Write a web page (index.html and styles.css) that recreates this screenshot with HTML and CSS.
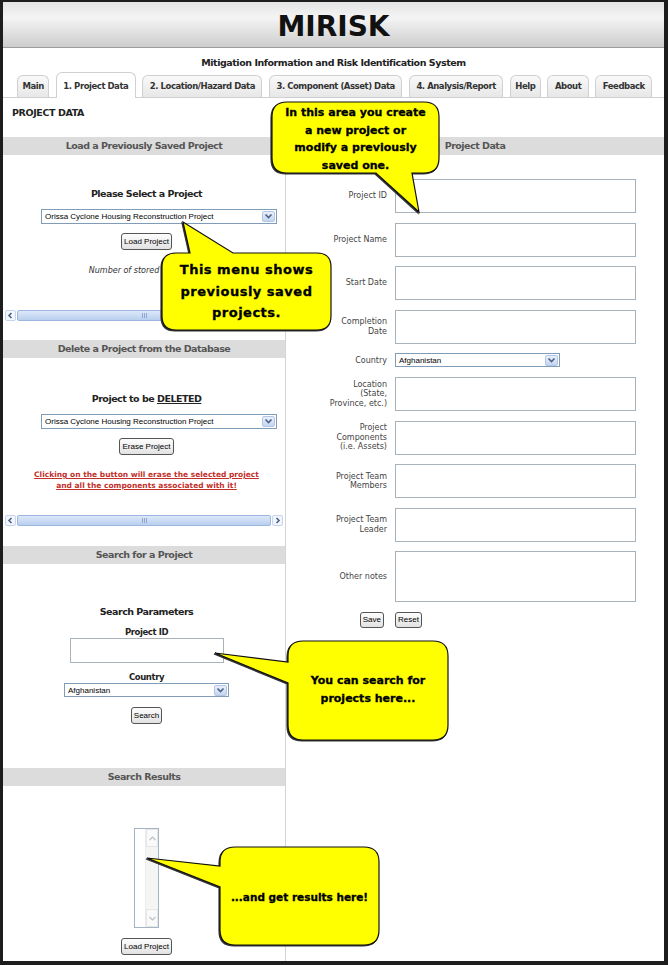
FILE: index.html
```html
<!DOCTYPE html>
<html lang="en">
<head>
    <meta charset="UTF-8">
    <meta name="viewport" content="width=device-width, initial-scale=1.0">
    <title>MIRISK - Project Data</title>
    <link rel="stylesheet" href="styles.css">
</head>
<body>
    <div class="frame">
        <div class="header">
            <h1>MIRISK</h1>
        </div>
        <div class="subtitle">Mitigation Information and Risk Identification System</div>

        <ul class="tabs">
            <li class="tight">Main</li>
            <li class="active">1. Project Data</li>
            <li>2. Location/Hazard Data</li>
            <li>3. Component (Asset) Data</li>
            <li>4. Analysis/Report</li>
            <li class="tight">Help</li>
            <li>About</li>
            <li>Feedback</li>
        </ul>

        <div class="page-title">PROJECT DATA</div>

        <div class="columns">
            <div class="left">
                <div class="panel panel-load">
                    <div class="band">Load a Previously Saved Project</div>
                    <div class="panel-body">
                        <h3>Please Select a Project</h3>
                        <div class="select wide">
                            <span>Orissa Cyclone Housing Reconstruction Project</span>
                            <i class="arrow"><svg viewBox="0 0 9 7" width="9" height="7"><path d="M1.5 1.5 4.5 4.5 7.5 1.5"/></svg></i>
                        </div>
                        <button class="btn">Load Project</button>
                        <p class="stored">Number of stored projects: 3</p>
                        <div class="hscroll">
                            <span class="sb-btn"><svg viewBox="0 0 7 7" width="7" height="7"><path d="M4.5 1 2 3.5 4.5 6"/></svg></span>
                            <span class="sb-thumb"><i></i></span>
                            <span class="sb-btn"><svg viewBox="0 0 7 7" width="7" height="7"><path d="M2.5 1 5 3.5 2.5 6"/></svg></span>
                        </div>
                    </div>
                </div>

                <div class="panel panel-delete">
                    <div class="band">Delete a Project from the Database</div>
                    <div class="panel-body">
                        <h3>Project to be <u>DELETED</u></h3>
                        <div class="select wide">
                            <span>Orissa Cyclone Housing Reconstruction Project</span>
                            <i class="arrow"><svg viewBox="0 0 9 7" width="9" height="7"><path d="M1.5 1.5 4.5 4.5 7.5 1.5"/></svg></i>
                        </div>
                        <button class="btn">Erase Project</button>
                        <p class="warning">Clicking on the button will erase the selected project<br>and all the components associated with it!</p>
                        <div class="hscroll">
                            <span class="sb-btn"><svg viewBox="0 0 7 7" width="7" height="7"><path d="M4.5 1 2 3.5 4.5 6"/></svg></span>
                            <span class="sb-thumb"><i></i></span>
                            <span class="sb-btn"><svg viewBox="0 0 7 7" width="7" height="7"><path d="M2.5 1 5 3.5 2.5 6"/></svg></span>
                        </div>
                    </div>
                </div>

                <div class="panel panel-search">
                    <div class="band">Search for a Project</div>
                    <div class="panel-body">
                        <h3>Search Parameters</h3>
                        <div class="field-label">Project ID</div>
                        <input type="text" class="search-input">
                        <div class="field-label">Country</div>
                        <div class="select country">
                            <span>Afghanistan</span>
                            <i class="arrow"><svg viewBox="0 0 9 7" width="9" height="7"><path d="M1.5 1.5 4.5 4.5 7.5 1.5"/></svg></i>
                        </div>
                        <button class="btn">Search</button>
                    </div>
                </div>

                <div class="panel panel-results">
                    <div class="band">Search Results</div>
                    <div class="panel-body">
                        <div class="listbox">
                            <div class="lb-scroll">
                                <span class="lb-btn"><svg viewBox="0 0 9 7" width="9" height="7"><path d="M1.5 5 4.5 2 7.5 5"/></svg></span>
                                <span class="lb-btn"><svg viewBox="0 0 9 7" width="9" height="7"><path d="M1.5 2 4.5 5 7.5 2"/></svg></span>
                            </div>
                        </div>
                        <button class="btn">Load Project</button>
                    </div>
                </div>
            </div>

            <div class="right">
                <div class="band">Project Data</div>
                <form class="project-form">
                    <label>Project ID</label>
                    <input type="text">
                    <label>Project Name</label>
                    <input type="text">
                    <label>Start Date</label>
                    <input type="text">
                    <label>Completion Date</label>
                    <input type="text">
                    <label>Country</label>
                    <div class="select short">
                        <span>Afghanistan</span>
                        <i class="arrow"><svg viewBox="0 0 9 7" width="9" height="7"><path d="M1.5 1.5 4.5 4.5 7.5 1.5"/></svg></i>
                    </div>
                    <label>Location (State, Province, etc.)</label>
                    <input type="text">
                    <label>Project Components (i.e. Assets)</label>
                    <input type="text">
                    <label>Project Team Members</label>
                    <input type="text">
                    <label>Project Team Leader</label>
                    <input type="text">
                    <label>Other notes</label>
                    <textarea class="notes"></textarea>
                    <button type="button" class="btn save">Save</button>
                    <button type="reset" class="btn reset">Reset</button>
                </form>
            </div>
        </div>
    </div>

    <!-- help callouts drawn over the page -->
    <svg class="callout-shapes" viewBox="0 0 668 965" width="668" height="965">
        <path d="M287 102 H424 Q439 102 439 117 V158 Q439 173 424 173 H412 L419 212 L376 173 H287 Q272 173 272 158 V117 Q272 102 287 102 Z"/>
        <path d="M176 253 H190 L183 222 L233 253 H317 Q331 253 331 267 V316 Q331 330 317 330 H176 Q162 330 162 316 V267 Q162 253 176 253 Z"/>
        <path d="M303 641 H433 Q448 641 448 656 V725 Q448 740 433 740 H303 Q288 740 288 725 V683 L215 653 L288 662 V656 Q288 641 303 641 Z"/>
        <path d="M235 847 H364 Q379 847 379 862 V930 Q379 945 364 945 H235 Q220 945 220 930 V887 L147 858 L220 866 V862 Q220 847 235 847 Z"/>
    </svg>
    <div class="callout-text c1">In this area you create<br>a new project or<br>modify a previously<br>saved one.</div>
    <div class="callout-text c2">This menu shows<br>previously saved<br>projects.</div>
    <div class="callout-text c3">You can search for<br>projects here...</div>
    <div class="callout-text c4">...and get results here!</div>
</body>
</html>
```

FILE: styles.css
```css
body {
    margin: 0;
    position: relative;
    font-family: "DejaVu Sans", Verdana, sans-serif;
    font-size: 8px;
    color: #333;
    background-color: #fff;
}

.frame {
    box-sizing: border-box;
    width: 668px;
    height: 965px;
    border-style: solid;
    border-color: #1d1d1d;
    border-width: 2px 4px 4px 3px;
    overflow: hidden;
    background-color: #fff;
}

.header {
    box-sizing: border-box;
    height: 46px;
    padding-top: 8px;
    background: linear-gradient(#e4e4e4, #f4f4f4 35%, #cdcdcd);
    border-bottom: 1px solid #9d9d9d;
    text-align: center;
}

.header h1 {
    margin: 0;
    font-size: 28px;
    line-height: 33px;
    color: #111;
}

.subtitle {
    padding: 9px 0 3px;
    line-height: 12px;
    font-size: 9.5px;
    font-weight: bold;
    letter-spacing: -0.45px;
    text-align: center;
    color: #222;
}

.tabs {
    display: flex;
    align-items: flex-end;
    gap: 6.5px;
    height: 25px;
    margin: 0;
    padding: 0 0 0 14px;
    list-style: none;
    border-bottom: 1px solid #d0d0d0;
}

.tabs li {
    box-sizing: border-box;
    height: 22px;
    padding: 0 6.5px;
    line-height: 21px;
    border: 1px solid #d0d0d0;
    border-bottom: none;
    border-radius: 6px 6px 0 0;
    background: linear-gradient(#f9f9f9, #e7e7e7);
    font-size: 8.5px;
    font-weight: bold;
    letter-spacing: -0.45px;
    color: #333;
    white-space: nowrap;
}

.tabs li.tight {
    padding: 0 4.5px;
}

.tabs li.active {
    height: 26px;
    margin-bottom: -1px;
    padding-top: 3px;
    background: #fff;
}

.page-title {
    box-sizing: border-box;
    height: 39px;
    padding: 9px 0 0 9px;
    line-height: 12px;
    font-size: 9.5px;
    font-weight: bold;
    letter-spacing: -0.4px;
    color: #222;
}

.columns {
    display: flex;
    height: 824px;
}

.left {
    flex: none;
    width: 282px;
}

.right {
    flex: 1;
    border-left: 1px solid #d4d4d4;
}

.band {
    height: 18px;
    line-height: 18px;
    background-color: #dcdcdc;
    text-align: center;
    font-size: 9.5px;
    font-weight: bold;
    letter-spacing: -0.5px;
    color: #555;
}

.panel-load { height: 203px; }
.panel-delete { height: 206px; }
.panel-search { height: 222px; }

.panel-body {
    display: flow-root;
    padding-left: 5px;
    text-align: center;
}

.panel-body h3 {
    margin: 33px 0 0;
    line-height: 12px;
    font-size: 9.5px;
    letter-spacing: -0.5px;
    color: #222;
}

.panel-delete h3 { margin-top: 35px; }
.panel-search h3 { margin-top: 42px; }

.select {
    display: flex;
    align-items: center;
    box-sizing: border-box;
    height: 15px;
    padding-left: 3px;
    border: 1px solid #7f9db9;
    background-color: #fff;
    font-family: "Liberation Sans", Arial, sans-serif;
    font-size: 8px;
    color: #000;
    text-align: left;
}

.select span {
    flex: 1;
    overflow: hidden;
    white-space: nowrap;
}

.select .arrow {
    display: flex;
    align-items: center;
    justify-content: center;
    box-sizing: border-box;
    width: 13px;
    height: 11px;
    margin-right: 1px;
    border: 1px solid #b4c6e6;
    border-radius: 2px;
    background: linear-gradient(#e8effa, #c4d5f1);
}

.select .arrow path,
.hscroll path,
.lb-btn path {
    fill: none;
    stroke: #4d6185;
    stroke-width: 1.6;
}

.select.wide {
    width: 236px;
    margin: 9px 0 0 33px;
}

.select.country {
    width: 165px;
    height: 14px;
    margin: 1px auto 0;
}

.select.short {
    width: 165px;
    height: 14px;
}

.btn {
    display: block;
    box-sizing: border-box;
    height: 17px;
    margin: 9px auto 0;
    padding: 0 2px;
    border: 1px solid #555;
    border-radius: 3px;
    background: linear-gradient(#fdfdfd, #e2e2e2);
    font-family: "Liberation Sans", Arial, sans-serif;
    font-size: 8px;
    color: #000;
}

.stored {
    margin: 15px 0 0;
    line-height: 12px;
    font-style: italic;
    color: #333;
}

.hscroll {
    display: flex;
    gap: 1px;
    height: 11px;
    margin: 33px 2px 0 -3px;
}

.panel-delete .hscroll { margin-top: 24px; }

.sb-btn {
    display: flex;
    align-items: center;
    justify-content: center;
    box-sizing: border-box;
    width: 11px;
    border: 1px solid #c6d5ec;
    border-radius: 2px;
    background-color: #f3f7fd;
}

.sb-thumb {
    flex: 1;
    display: flex;
    align-items: center;
    justify-content: center;
    border: 1px solid #9db7e2;
    border-radius: 2px;
    background: linear-gradient(#dce8f8, #b9cfef);
}

.sb-thumb i {
    width: 1px;
    height: 5px;
    background-color: #8ba7d3;
    box-shadow: 2px 0 #8ba7d3, -2px 0 #8ba7d3;
}

.warning {
    margin: 14px 0 0;
    line-height: 11px;
    font-size: 7.5px;
    font-weight: bold;
    color: #c3302b;
    text-decoration: underline;
}

.field-label {
    margin-top: 9px;
    line-height: 10px;
    font-size: 8.5px;
    font-weight: bold;
    letter-spacing: -0.4px;
    color: #222;
}

.search-input {
    display: block;
    box-sizing: border-box;
    width: 154px;
    height: 25px;
    margin: 1px auto 0;
    border: 1px solid #a9b3bc;
}

.panel-search .btn { margin-top: 10px; }

.listbox {
    display: flex;
    justify-content: flex-end;
    box-sizing: border-box;
    width: 25px;
    height: 100px;
    margin: 42px auto 0;
    border: 1px solid #a5b3c6;
    background-color: #fff;
}

.lb-scroll {
    display: flex;
    flex-direction: column;
    justify-content: space-between;
    width: 12px;
    border-left: 1px solid #ececec;
    background-color: #f5f5f3;
}

.lb-btn {
    display: flex;
    align-items: center;
    justify-content: center;
    height: 16px;
    border: 1px solid #e6e6e6;
    background-color: #fafafa;
}

.lb-btn path { stroke: #b9bfc7; stroke-width: 1.2; }

.panel-results .btn { margin-top: 10px; }

.project-form {
    display: grid;
    grid-template-columns: 101px 241px;
    column-gap: 8px;
    row-gap: 9.6px;
    align-items: center;
    padding-top: 24px;
}

.project-form label {
    padding-left: 41px;
    line-height: 9.5px;
    text-align: right;
    color: #444;
}

.project-form input,
.project-form textarea {
    display: block;
    box-sizing: border-box;
    width: 100%;
    height: 34px;
    margin: 0;
    border: 1px solid #a9b3bc;
    resize: none;
}

.project-form textarea.notes { height: 51px; }

.project-form .btn {
    height: 16px;
    margin: 0;
}

.project-form .save {
    justify-self: end;
    margin-right: 3px;
}

.project-form .reset { justify-self: start; }

.callout-shapes {
    position: absolute;
    left: 0;
    top: 0;
    pointer-events: none;
    filter: drop-shadow(-1px 1px 0 #333);
}

.callout-shapes path {
    fill: #ffff00;
    stroke: #111;
    stroke-width: 1.2;
}

.callout-text {
    position: absolute;
    font-family: "DejaVu Sans", sans-serif;
    font-weight: bold;
    color: #000;
    text-align: center;
    -webkit-text-stroke: 0.3px #000;
}

.c1 { left: 272px; top: 104px; width: 167px; font-size: 11px; line-height: 17.5px; }
.c2 { left: 162px; top: 259px; width: 169px; font-size: 13px; line-height: 21.5px; letter-spacing: 0.5px; }
.c3 { left: 288px; top: 672px; width: 160px; font-size: 11px; line-height: 18px; }
.c4 { left: 220px; top: 888px; width: 159px; font-size: 10.5px; line-height: 18px; }
```
